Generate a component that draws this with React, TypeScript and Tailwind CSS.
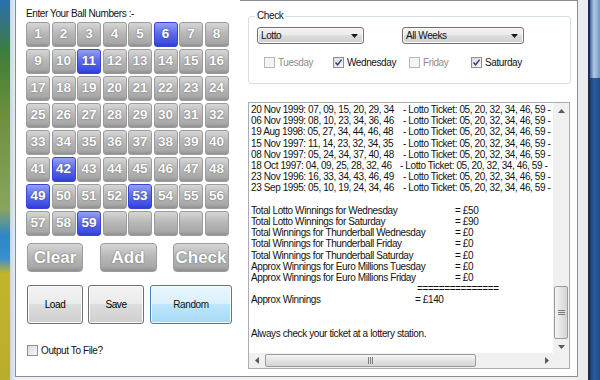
import React from 'react';

const selectedBalls = [6, 11, 42, 49, 53, 59];

const draws = [
  { date: '20 Nov 1999: 07, 09, 15, 20, 29, 34', w: 'w-[152px]' },
  { date: '06 Nov 1999: 08, 10, 23, 34, 36, 46', w: 'w-[152px]' },
  { date: '19 Aug 1998: 05, 27, 34, 44, 46, 48', w: 'w-[152px]' },
  { date: '15 Nov 1997: 11, 14, 23, 32, 34, 35', w: 'w-[152px]' },
  { date: '08 Nov 1997: 05, 24, 34, 37, 40, 48', w: 'w-[152px]' },
  { date: '18 Oct 1997: 04, 09, 25, 28, 32, 46', w: 'w-[149px]' },
  { date: '23 Nov 1996: 16, 33, 34, 43, 46, 49', w: 'w-[152px]' },
  { date: '23 Sep 1995: 05, 10, 19, 24, 34, 46', w: 'w-[152px]' },
];

const totals = [
  ['Total Lotto Winnings for Wednesday', '= £50'],
  ['Total Lotto Winnings for Saturday', '= £90'],
  ['Total Winnings for Thunderball Wednesday', '= £0'],
  ['Total Winnings for Thunderball Friday', '= £0'],
  ['Total Winnings for Thunderball Saturday', '= £0'],
  ['Approx Winnings for Euro Millions Tuesday', '= £0'],
  ['Approx Winnings for Euro Millions Friday', '= £0'],
];

const days = [
  { label: 'Tuesday', checked: false, disabled: true, w: 'w-[69px]' },
  { label: 'Wednesday', checked: true, disabled: false, w: 'w-[76px]' },
  { label: 'Friday', checked: false, disabled: true, w: 'w-[62px]' },
  { label: 'Saturday', checked: true, disabled: false, w: 'w-[70px]' },
];

const winBtn =
  'border border-[#707070] rounded-[3px] bg-[linear-gradient(to_bottom,#f2f2f2_0%,#ebebeb_50%,#dddddd_50%,#cfcfcf_100%)] shadow-[inset_0_0_0_1px_#fcfcfc] text-[10px] text-black flex items-center justify-center';

const Checkbox: React.FC<{ checked?: boolean; disabled?: boolean }> = ({ checked, disabled }) => (
  <span
    className={`w-[11px] h-[11px] flex items-center justify-center border ${
      disabled ? 'border-[#b8b8b8] bg-[#f4f4f4]' : 'border-[#8e8f8f] bg-[linear-gradient(135deg,#dcdcdc,#f8f8f8)]'
    }`}
  >
    {checked && (
      <svg width="9" height="9" viewBox="0 0 9 9">
        <path d="M1.5 4.5 L3.6 6.8 L7.6 1.6" fill="none" stroke="#2d3e78" strokeWidth="1.4" />
      </svg>
    )}
  </span>
);

const Combo: React.FC<{ text: string; w: string }> = ({ text, w }) => (
  <div
    className={`${w} h-[17px] border border-[#707070] rounded-[3px] bg-[linear-gradient(to_bottom,#f2f2f2_0%,#ebebeb_50%,#dddddd_50%,#cfcfcf_100%)] shadow-[inset_0_0_0_1px_#fcfcfc] flex items-center justify-between pl-[3px] pr-[5px] text-[10px]`}
  >
    <span>{text}</span>
    <svg width="7" height="4" viewBox="0 0 7 4">
      <polygon points="0,0 7,0 3.5,4" fill="#1a1a1a" />
    </svg>
  </div>
);

const BallGrid: React.FC = () => {
  const cells = Array.from({ length: 64 }, (_, i) => i + 1);
  return (
    <div className="grid grid-cols-[repeat(8,24px)] auto-rows-[25px] gap-x-[1.5px] gap-y-[2px]">
      {cells.map((n) => {
        const on = selectedBalls.includes(n);
        return (
          <div
            key={n}
            className={`rounded-[3px] border flex items-center justify-center font-bold text-[13.5px] tracking-normal text-white [text-shadow:0_0_1.5px_#555] ${
              on
                ? 'border-[#3444d6] bg-[linear-gradient(to_bottom,#95a0f5,#5c6aec_45%,#3f4ee4_85%,#2e3dd2)]'
                : 'border-[#9c9c9c] bg-[linear-gradient(to_bottom,#d6d6d6,#b8b8b8_45%,#a8a8a8_85%,#909090)]'
            }`}
          >
            {n <= 59 ? n : ''}
          </div>
        );
      })}
    </div>
  );
};

const BigBtn: React.FC<{ text: string; w: string }> = ({ text, w }) => (
  <div
    className={`${w} h-[29px] rounded-[4px] border border-[#9c9c9c] bg-[linear-gradient(to_bottom,#d6d6d6,#b8b8b8_45%,#a8a8a8_85%,#8e8e8e)] flex items-center justify-center font-bold text-[17px] tracking-normal text-white [text-shadow:0_0_1.5px_#555]`}
  >
    {text}
  </div>
);

const ScrollArrow: React.FC<{ dir: 'up' | 'down' | 'left' | 'right' }> = ({ dir }) => {
  const pts = {
    up: '0,4 7,4 3.5,0',
    down: '0,0 7,0 3.5,4',
    left: '4,0 4,7 0,3.5',
    right: '0,0 0,7 4,3.5',
  }[dir];
  const horiz = dir === 'left' || dir === 'right';
  return (
    <svg width={horiz ? 4 : 7} height={horiz ? 7 : 4} viewBox={horiz ? '0 0 4 7' : '0 0 7 4'}>
      <polygon points={pts} fill="#5a5a5a" />
    </svg>
  );
};

export default function App() {
  return (
    <div className="w-[600px] h-[380px] flex bg-[#f0f0f0] overflow-hidden font-['Liberation_Sans',Arial,sans-serif] tracking-[-0.4px] text-[#111]">
      {/* desktop wallpaper + window frame on the left */}
      <div className="w-[10px] bg-[linear-gradient(to_bottom,#2a6fb0_0%,#3f7d3a_14%,#6c8f3c_30%,#8aa460_55%,#2e86c8_62%,#3a8fcf_68%,#c3b42a_72%,#b9ad2c_100%)]" />
      <div className="w-[5px] bg-[linear-gradient(to_right,#c9d7e4,#e3ebf2)]" />

      {/* tab page */}
      <div className="w-[563px] flex flex-col">
        <div className="h-[377px] border-l border-r border-b border-[#898c95] bg-white flex flex-col">
          <div className="h-px ml-[224px] bg-[#898c95]" />
          <div className="flex flex-1">
            {/* left: ball picker */}
            <div className="w-[224px] pl-[10px] flex flex-col">
              <div className="pt-[7px] text-[10px] leading-[11px]">Enter Your Ball Numbers :-</div>
              <div className="mt-[3px]">
                <BallGrid />
              </div>
              <div className="mt-[7px] ml-[1px] w-[202px] flex justify-between">
                <BigBtn text="Clear" w="w-[56px]" />
                <BigBtn text="Add" w="w-[57px]" />
                <BigBtn text="Check" w="w-[56px]" />
              </div>
              <div className="mt-[13px] ml-[1px] flex gap-[5px]">
                <div className={`${winBtn} w-[56px] h-[39px]`}>Load</div>
                <div className={`${winBtn} w-[56px] h-[39px]`}>Save</div>
                <div className="w-[82px] h-[39px] ml-px border border-[#3c7fb1] rounded-[3px] bg-[linear-gradient(to_bottom,#eaf6fd_0%,#d9f0fc_50%,#bee6fd_50%,#a7d9f5_100%)] shadow-[inset_0_0_0_1px_#f4fbfe] text-[10px] flex items-center justify-center">
                  Random
                </div>
              </div>
              <div className="mt-[19px] ml-[1px] flex items-center gap-[3px] text-[10px]">
                <Checkbox />
                <span>Output To File?</span>
              </div>
            </div>

            {/* right: check options + results */}
            <div className="flex-1 pl-[8px] flex flex-col">
              <div className="relative mt-[15px] w-[323px] h-[68px] border border-[#d5dfe5] rounded-[3px]">
                <span className="absolute left-[6px] -top-[7px] bg-white px-[2px] text-[10px] leading-[12px]">Check</span>
                <div className="flex pl-[8px] pt-[10px] gap-[38px]">
                  <Combo text="Lotto" w="w-[107px]" />
                  <Combo text="All Weeks" w="w-[122px]" />
                </div>
                <div className="flex pl-[15px] pt-[11px]">
                  {days.map((d) => (
                    <div key={d.label} className={`${d.w} flex items-center gap-[3px] text-[10px] ${d.disabled ? 'text-[#8d8d8d]' : ''}`}>
                      <Checkbox checked={d.checked} disabled={d.disabled} />
                      <span>{d.label}</span>
                    </div>
                  ))}
                </div>
              </div>

              {/* results text box */}
              <div className="mt-[18px] w-[322px] h-[267px] border border-[#abadb3] flex flex-col">
                <div className="flex flex-1 min-h-0">
                  <div className="flex-1 overflow-hidden pl-[2px] pt-[1px] text-[10px] leading-[11.2px] whitespace-pre">
                    {draws.map((d) => (
                      <div key={d.date} className="flex">
                        <span className={`${d.w} shrink-0`}>{d.date}</span>
                        <span>- Lotto Ticket: 05, 20, 32, 34, 46, 59 -</span>
                      </div>
                    ))}
                    <div>&nbsp;</div>
                    {totals.map(([k, v]) => (
                      <div key={k} className="flex">
                        <span className="w-[204px] shrink-0">{k}</span>
                        <span>{v}</span>
                      </div>
                    ))}
                    <div className="pl-[166px]">===============</div>
                    <div className="flex">
                      <span className="w-[164px] shrink-0">Approx Winnings</span>
                      <span>= £140</span>
                    </div>
                    <div>&nbsp;</div>
                    <div>&nbsp;</div>
                    <div>Always check your ticket at a lottery station.</div>
                  </div>
                  {/* vertical scrollbar */}
                  <div className="w-[16px] bg-[#f0f0f0] flex flex-col items-center">
                    <div className="h-[16px] flex items-center justify-center">
                      <ScrollArrow dir="up" />
                    </div>
                    <div className="flex-1 w-full flex flex-col justify-end px-px pb-[2px]">
                      <div className="h-[53px] rounded-[2px] border border-[#9b9b9b] bg-[linear-gradient(to_right,#f4f4f4,#e4e4e4_50%,#d4d4d4)] flex items-center justify-center">
                        <svg width="7" height="5" viewBox="0 0 7 5">
                          <path d="M0 0.5H7M0 2.5H7M0 4.5H7" stroke="#7a7a7a" strokeWidth="1" />
                        </svg>
                      </div>
                    </div>
                    <div className="h-[12px] flex items-center justify-center">
                      <ScrollArrow dir="down" />
                    </div>
                  </div>
                </div>
                {/* horizontal scrollbar */}
                <div className="h-[15px] flex bg-[#f0f0f0]">
                  <div className="w-[16px] flex items-center justify-center">
                    <ScrollArrow dir="left" />
                  </div>
                  <div className="w-[211px] my-px rounded-[2px] border border-[#9b9b9b] bg-[linear-gradient(to_bottom,#f4f4f4,#e4e4e4_50%,#d4d4d4)] flex items-center justify-center">
                    <svg width="5" height="7" viewBox="0 0 5 7">
                      <path d="M0.5 0V7M2.5 0V7M4.5 0V7" stroke="#7a7a7a" strokeWidth="1" />
                    </svg>
                  </div>
                  <div className="flex-1 flex items-center justify-end pr-[4px]">
                    <ScrollArrow dir="right" />
                  </div>
                  <div className="w-[16px]" />
                </div>
              </div>
            </div>
          </div>
        </div>
      </div>

      {/* window edge + desktop on the right */}
      <div className="w-[10px] bg-[#ececec]" />
      <div className="w-[2px] bg-[#1d2e4a]" />
      <div className="w-[10px] flex flex-col">
        <div className="h-[78px] bg-[linear-gradient(to_right,#3b6ba3,#b3cbe3_40%,#6f98c4)]" />
        <div className="flex-1 bg-[linear-gradient(to_right,#163f78,#2a5c9c_40%,#1d4a86)]" />
      </div>
    </div>
  );
}
